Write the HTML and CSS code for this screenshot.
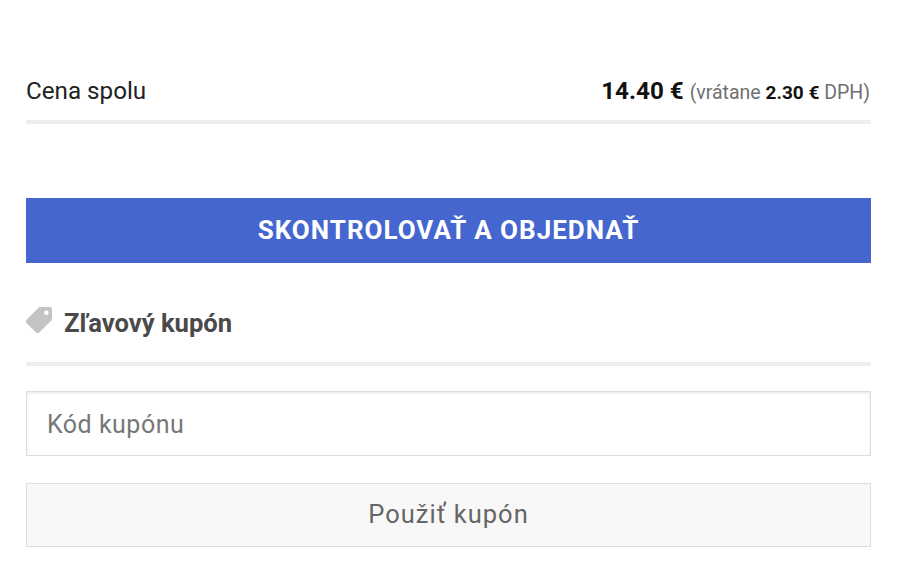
FILE: index.html
```html
<!DOCTYPE html>
<html lang="sk">
<head>
    <meta charset="UTF-8">
    <meta name="viewport" content="width=device-width, initial-scale=1.0">
    <title>Košík</title>
    <link rel="stylesheet" href="styles.css">
</head>
<body>
    <div class="container">
        <div class="total-row">
            <span class="total-label">Cena spolu</span>
            <span class="total-price"><b class="price">14.40 €</b> <small class="tax">(vrátane <b>2.30 €</b> DPH)</small></span>
        </div>
        <button class="checkout-btn">SKONTROLOVAŤ A OBJEDNAŤ</button>
        <div class="coupon-title">
            <svg class="tag-icon" width="26" height="26" viewBox="1.5 1.5 23 23"><path d="M14 1.5h8.5a2 2 0 0 1 2 2V12a2 2 0 0 1-.6 1.4L13.2 24.1a2 2 0 0 1-2.8 0L1.9 15.6a2 2 0 0 1 0-2.8L12.6 2.1A2 2 0 0 1 14 1.5zM19.5 4.5a2 2 0 1 0 0 4 2 2 0 0 0 0-4z" fill="#c4c4c4" fill-rule="evenodd"/></svg>
            <span>Zľavový kupón</span>
        </div>
        <input class="coupon-input" type="text" placeholder="Kód kupónu">
        <button class="coupon-btn">Použiť kupón</button>
    </div>
</body>
</html>
```
FILE: styles.css
```css
* {
    margin: 0;
    padding: 0;
    box-sizing: border-box;
    font-family: Roboto, Arial, sans-serif;
}
body {
    background: #fff;
}
.container {
    display: flex;
    flex-direction: column;
    padding: 69px 29px 0 26px;
}
.total-row {
    display: flex;
    justify-content: space-between;
    align-items: center;
    height: 55px;
    padding-bottom: 8px;
    border-bottom: 4px solid #eeeeee;
    color: #222;
}
.total-label {
    font-size: 24.2px;
}
.total-price {
    padding-right: 1px;
}
.price {
    margin-right: 2px;
    font-size: 24.2px;
    font-weight: 700;
    color: #111;
}
.tax {
    font-size: 19.5px;
    color: #707070;
}
.tax b {
    font-size: 19px;
    color: #111;
}
.checkout-btn {
    margin-top: 74px;
    height: 65px;
    padding-bottom: 2px;
    border: none;
    background: #4566cf;
    color: #fff;
    font-size: 26px;
    font-weight: 700;
    letter-spacing: 1px;
}
.coupon-title {
    display: flex;
    align-items: center;
    gap: 12px;
    height: 103px;
    padding-top: 21px;
    border-bottom: 4px solid #eeeeee;
    color: #4a4a4a;
    font-size: 25.6px;
    font-weight: 700;
}
.tag-icon {
    margin-top: -6px;
}
.coupon-input {
    margin-top: 25px;
    height: 65px;
    padding: 2px 20px 0;
    border: 1px solid #ddd;
    box-shadow: inset 0 1px 3px rgba(0, 0, 0, 0.1);
    font-size: 25px;
    letter-spacing: 0.5px;
}
.coupon-input::placeholder {
    color: #777;
}
.coupon-btn {
    margin-top: 27px;
    height: 64px;
    padding-bottom: 2px;
    border: 1px solid #ddd;
    background: #f8f8f8;
    color: #666;
    font-size: 25.5px;
    letter-spacing: 1px;
}
```
